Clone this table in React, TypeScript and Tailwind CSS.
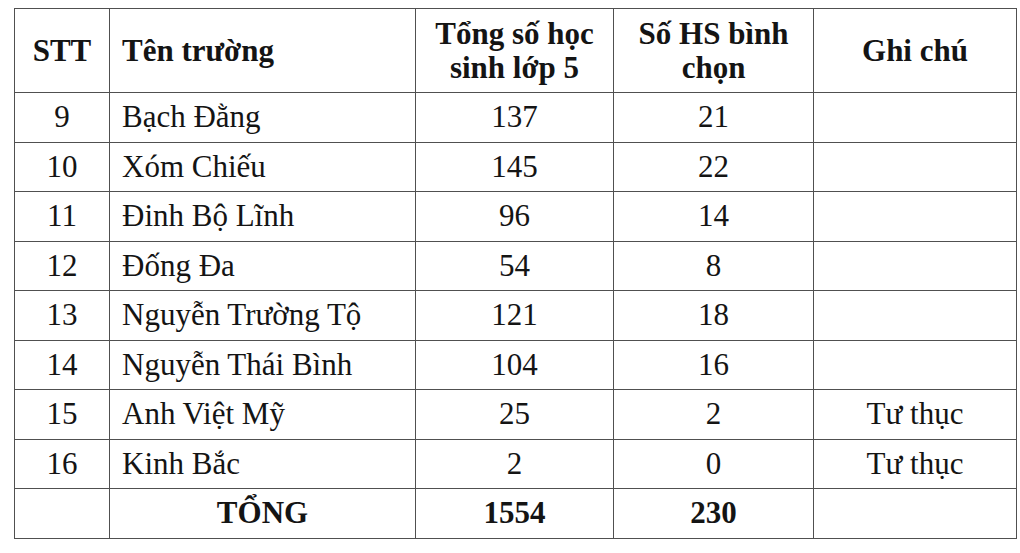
const rows: [string, string, string, string, string][] = [
  ['9', 'Bạch Đằng', '137', '21', ''],
  ['10', 'Xóm Chiếu', '145', '22', ''],
  ['11', 'Đinh Bộ Lĩnh', '96', '14', ''],
  ['12', 'Đống Đa', '54', '8', ''],
  ['13', 'Nguyễn Trường Tộ', '121', '18', ''],
  ['14', 'Nguyễn Thái Bình', '104', '16', ''],
  ['15', 'Anh Việt Mỹ', '25', '2', 'Tư thục'],
  ['16', 'Kinh Bắc', '2', '0', 'Tư thục'],
];

const cell =
  "border border-[#505050] p-0 align-middle font-['Liberation_Serif','Times_New_Roman',serif]";

export default function App() {
  return (
    <div className="h-[553px] w-[1020px] bg-white pl-[14px] pt-[8px] font-['Liberation_Serif','Times_New_Roman',serif] text-[#141414]">
      <table className="w-[1002px] table-fixed border-collapse text-[31px] leading-[34px]">
        <colgroup>
          <col className="w-[95px]" />
          <col className="w-[306px]" />
          <col className="w-[198px]" />
          <col className="w-[200px]" />
          <col className="w-[203px]" />
        </colgroup>
        <thead>
          <tr className="h-[84px] font-bold">
            <th className={`${cell} text-center`}>STT</th>
            <th className={`${cell} pl-[12px] text-left`}>Tên trường</th>
            <th className={`${cell} text-center`}>
              Tổng số học
              <br />
              sinh lớp 5
            </th>
            <th className={`${cell} text-center`}>
              Số HS bình
              <br />
              chọn
            </th>
            <th className={`${cell} text-center`}>Ghi chú</th>
          </tr>
        </thead>
        <tbody>
          {rows.map(([stt, name, total, voted, note]) => (
            <tr key={stt} className="h-[49.5px]">
              <td className={`${cell} text-center`}>{stt}</td>
              <td className={`${cell} pl-[12px]`}>{name}</td>
              <td className={`${cell} text-center`}>{total}</td>
              <td className={`${cell} text-center`}>{voted}</td>
              <td className={`${cell} text-center`}>{note}</td>
            </tr>
          ))}
          <tr className="h-[49.5px] font-bold">
            <td className={cell}></td>
            <td className={`${cell} text-center`}>TỔNG</td>
            <td className={`${cell} text-center`}>1554</td>
            <td className={`${cell} text-center`}>230</td>
            <td className={cell}></td>
          </tr>
        </tbody>
      </table>
    </div>
  );
}
